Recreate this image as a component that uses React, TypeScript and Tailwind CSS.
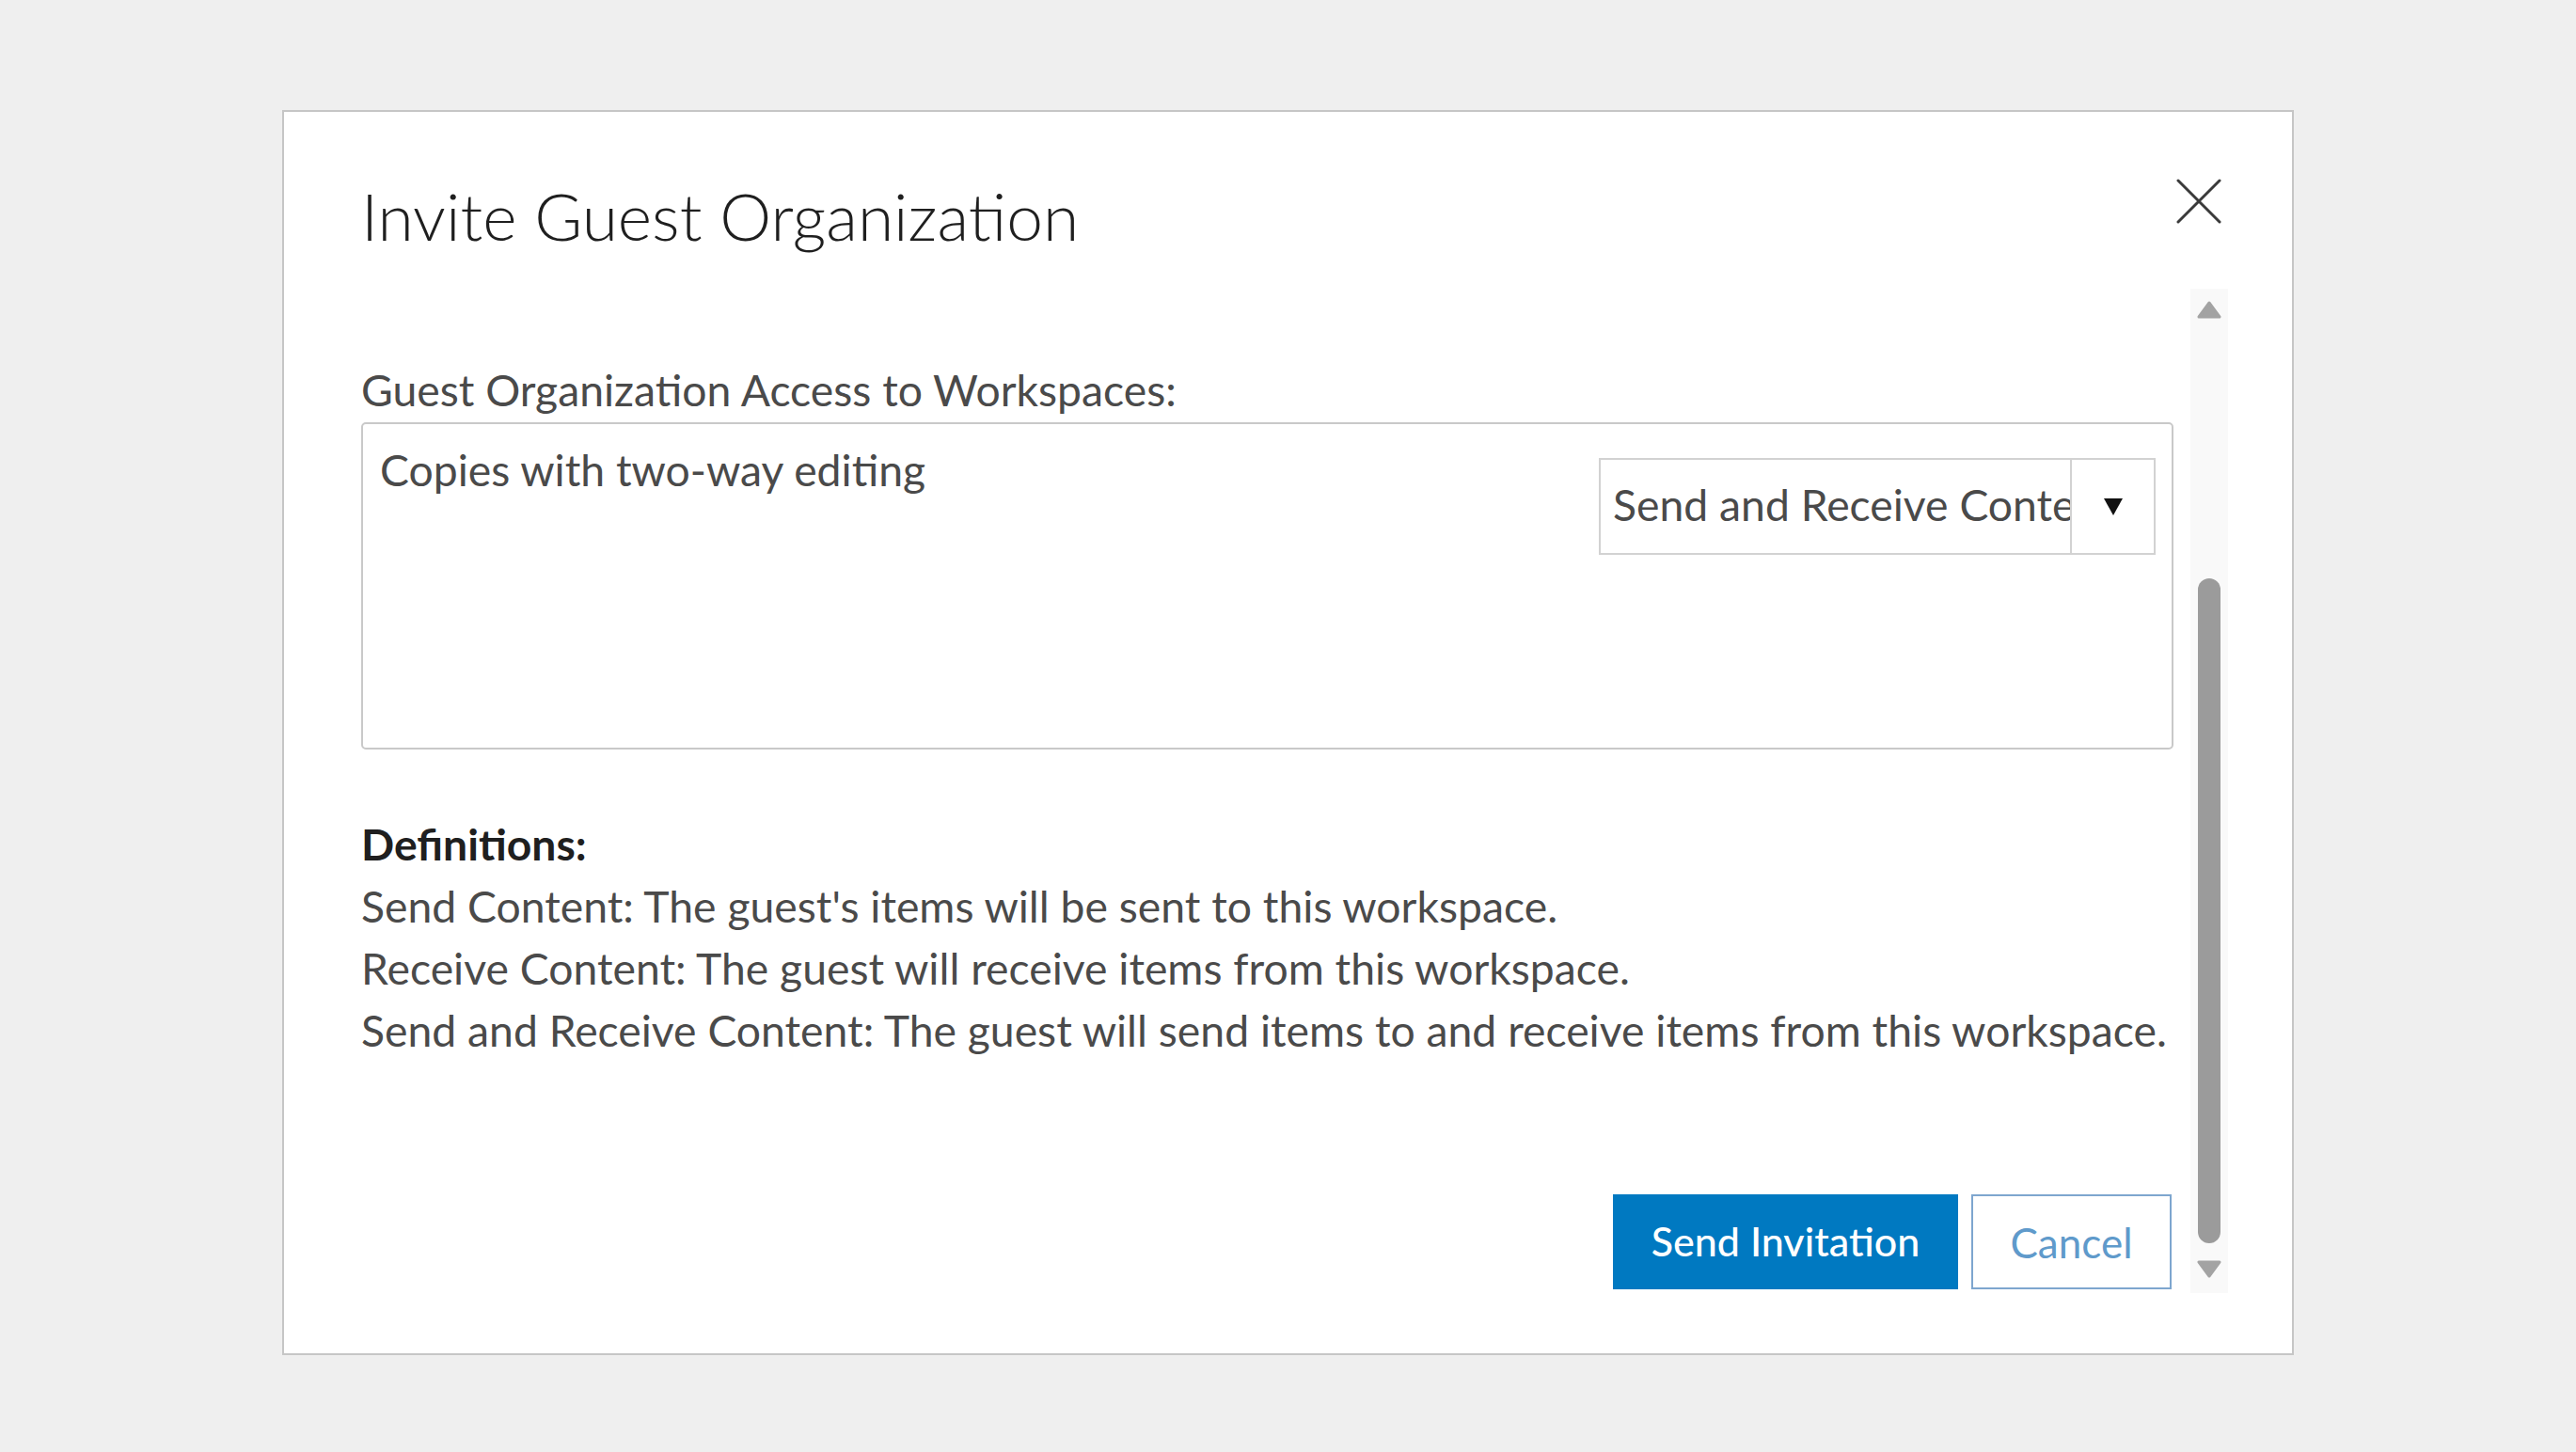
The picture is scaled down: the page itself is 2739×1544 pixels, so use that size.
import React from 'react';

const definitions = [
  "Send Content: The guest's items will be sent to this workspace.",
  'Receive Content: The guest will receive items from this workspace.',
  'Send and Receive Content: The guest will send items to and receive items from this workspace.',
];

const Scrollbar: React.FC = () => (
  <div className="w-[40px] h-[1068px] bg-[#f9f9f9] flex flex-col items-center pt-[13px]">
    <svg width="26" height="19" viewBox="0 0 26 19">
      <path d="M13 2 L24 17 L2 17 Z" fill="#a3a3a3" stroke="#a3a3a3" strokeWidth="3" strokeLinejoin="round" />
    </svg>
    <div className="mt-[276px] w-[24px] h-[707px] rounded-full bg-[#9b9b9b]" />
    <svg className="mt-[18px]" width="26" height="19" viewBox="0 0 26 19">
      <path d="M2 2 L24 2 L13 17 Z" fill="#a3a3a3" stroke="#a3a3a3" strokeWidth="3" strokeLinejoin="round" />
    </svg>
  </div>
);

const App: React.FC = () => {
  return (
    <div className="w-[2739px] h-[1544px] bg-[#efefef] pt-[117px] pl-[300px]" style={{ fontFamily: 'Lato, "Noto Sans", sans-serif' }}>
      <div className="relative w-[2139px] h-[1324px] bg-white border-2 border-[#c6c6c6] flex flex-col pt-[71px] pl-[82px]">
        {/* Header */}
        <h1 className="h-[80px] leading-[78px] text-[69.5px] font-light text-[#1f1f1f]">Invite Guest Organization</h1>
        <button className="absolute right-[75px] top-[71px] w-[48px] h-[48px]">
          <svg width="48" height="48" viewBox="0 0 48 48">
            <path d="M2 2 L46 46 M46 2 L2 46" stroke="#3a3a3a" strokeWidth="3" strokeLinecap="round" />
          </svg>
        </button>

        {/* Body */}
        <div className="mt-[37px] flex gap-[18px]">
          <div className="w-[1927px] pt-[74px] flex flex-col">
            <label className="text-[46.3px] leading-[66px] text-[#4a4a4a] mb-[2px]">Guest Organization Access to Workspaces:</label>
            <div className="h-[348px] border-2 border-[#c9c9c9] rounded-[5px] flex justify-between pl-[18px] pr-[17px] pt-[15px]">
              <span className="text-[46.3px] leading-[66px] text-[#4a4a4a]">Copies with two-way editing</span>
              <div className="mt-[21px] w-[592px] h-[103px] border-2 border-[#d2d2d2] flex">
                <div className="flex-1 overflow-hidden whitespace-nowrap pl-[13px] text-[46.3px] leading-[94px] text-[#4a4a4a]">Send and Receive Content</div>
                <div className="w-[89px] border-l-2 border-[#d2d2d2] flex items-center justify-center">
                  <svg width="22" height="22" viewBox="0 0 22 22">
                    <path d="M1 2 L21 2 L11 20 Z" fill="#111" />
                  </svg>
                </div>
              </div>
            </div>

            <div className="mt-[67px] text-[46.3px] leading-[66px] text-[#4a4a4a] whitespace-nowrap">
              <div className="font-bold text-[#1f1f1f]">Definitions:</div>
              {definitions.map((d, i) => (
                <div key={i}>{d}</div>
              ))}
            </div>

            <div className="mt-[142px] flex justify-end gap-[14px] pr-[2px]">
              <button className="w-[367px] h-[101px] bg-[#0079c1] text-white text-[43px] font-medium">Send Invitation</button>
              <button className="w-[213px] h-[101px] border-2 border-[#7ea6cf] bg-white text-[#5f9acb] text-[44px]">Cancel</button>
            </div>
          </div>
          <Scrollbar />
        </div>
      </div>
    </div>
  );
};

export default App;
